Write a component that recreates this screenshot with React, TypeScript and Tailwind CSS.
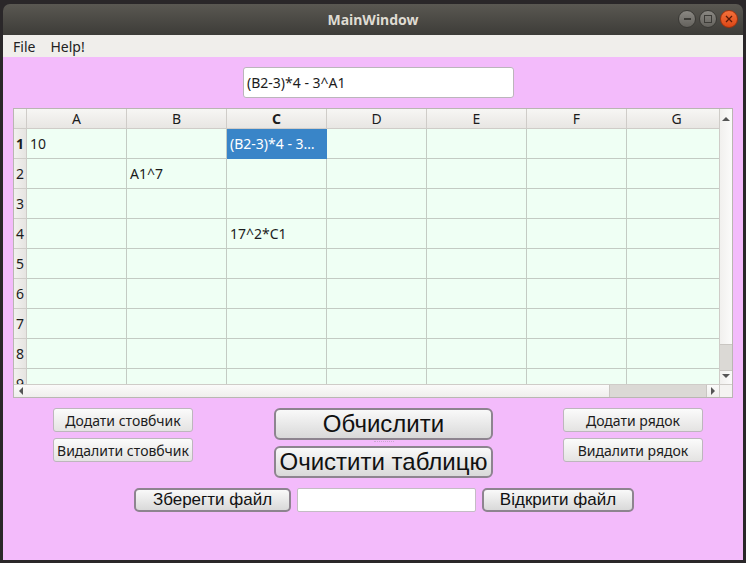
const cols = ['A', 'B', 'C', 'D', 'E', 'F', 'G']

const cells: Record<string, string> = {
  '1A': '10',
  '2B': 'A1^7',
  '4C': '17^2*C1',
}

function WinButton({ kind }: { kind: 'min' | 'max' | 'close' }) {
  const bg =
    kind === 'close'
      ? 'bg-gradient-to-b from-[#f4703a] to-[#dc4716] border-[#9c3310]'
      : 'bg-gradient-to-b from-[#8a8883] to-[#64625d] border-[#3a3935]'
  return (
    <div className={`w-[18px] h-[18px] rounded-full border flex items-center justify-center ${bg}`}>
      {kind === 'min' && <div className="w-[7px] h-[2px] bg-[#3c3b37]" />}
      {kind === 'max' && <div className="w-[8px] h-[8px] border border-[#3c3b37]" />}
      {kind === 'close' && (
        <svg width="8" height="8" viewBox="0 0 8 8">
          <path d="M1 1L7 7M7 1L1 7" stroke="#5a1a08" strokeWidth="1.3" />
        </svg>
      )}
    </div>
  )
}

function SmallButton({ children }: { children: React.ReactNode }) {
  return (
    <div className="h-[24px] w-[140px] flex items-center justify-center rounded-[3px] border border-[#bdb6bd] bg-gradient-to-b from-[#fbfbfb] to-[#e4e3e2] text-[14px] text-[#1c1c1c] font-['Noto_Sans',sans-serif]">
      {children}
    </div>
  )
}

function BigButton({ children }: { children: React.ReactNode }) {
  return (
    <div className="h-[32px] w-[219px] flex items-center justify-center rounded-[6px] border-2 border-[#8d848f] bg-gradient-to-b from-[#f9f9f9] to-[#d9d9d9] text-[24px] text-[#111] font-['Liberation_Sans',sans-serif]">
      {children}
    </div>
  )
}

function FileButton({ children, w }: { children: React.ReactNode; w: string }) {
  return (
    <div className={`h-[24px] ${w} flex items-center justify-center rounded-[5px] border-2 border-[#8d848f] bg-gradient-to-b from-[#f9f9f9] to-[#d9d9d9] text-[17px] text-[#111] font-['Liberation_Sans',sans-serif]`}>
      {children}
    </div>
  )
}

function Sheet() {
  const rows = [1, 2, 3, 4, 5, 6, 7, 8, 9]
  return (
    <div className="ml-[10px] mt-[10px] w-[720px] h-[290px] border border-[#b9b6b2] bg-[#effff4] flex flex-col font-['Noto_Sans',sans-serif] text-[14px] text-[#1c1c1c]">
      <div className="flex h-[275px]">
        <div className="w-[706px] h-[275px] overflow-hidden">
          {/* header */}
          <div className="flex h-[20px]">
            <div className="w-[13px] shrink-0 bg-gradient-to-b from-[#f7f6f4] to-[#e8e6e3] border-r border-b border-[#cfccc8]" />
            {cols.map((c) => (
              <div
                key={c}
                className={`w-[100px] shrink-0 flex items-center justify-center bg-gradient-to-b from-[#f7f6f4] to-[#e8e6e3] border-r border-b border-[#cfccc8] ${c === 'C' ? 'font-bold' : ''}`}
              >
                {c}
              </div>
            ))}
          </div>
          {rows.map((r) => (
            <div key={r} className="flex h-[30px]">
              <div
                className={`w-[13px] shrink-0 flex items-center justify-center bg-gradient-to-r from-[#f2f1ef] to-[#e6e4e1] border-r border-b border-[#cfccc8] ${r === 1 ? 'font-bold' : ''}`}
              >
                {r}
              </div>
              {cols.map((c) => {
                const sel = r === 1 && c === 'C'
                return (
                  <div
                    key={c}
                    className={`w-[100px] shrink-0 flex items-center px-[3px] whitespace-nowrap overflow-hidden border-r border-b ${sel ? 'bg-[#3985c8] text-white border-[#3985c8]' : 'border-[#c3cbc3]'}`}
                  >
                    {sel ? '(B2-3)*4 - 3…' : cells[`${r}${c}`] ?? ''}
                  </div>
                )
              })}
            </div>
          ))}
        </div>
        {/* vertical scrollbar */}
        <div className="w-[13px] h-[275px] border-l border-[#cfccc8] bg-gradient-to-r from-[#f1f0ee] to-[#fbfbfa] flex flex-col items-center">
          <div className="h-[12px] flex items-end">
            <div className="w-0 h-0 border-l-[4px] border-r-[4px] border-b-[4px] border-l-transparent border-r-transparent border-b-[#555]" />
          </div>
          <div className="flex-1" />
          <div className="w-[12px] h-[27px] bg-[#dbd9d5] border-y border-[#c9c6c2]" />
          <div className="h-[13px] flex items-start pt-[3px]">
            <div className="w-0 h-0 border-l-[4px] border-r-[4px] border-t-[4px] border-l-transparent border-r-transparent border-t-[#555]" />
          </div>
        </div>
      </div>
      {/* horizontal scrollbar */}
      <div className="flex h-[13px]">
        <div className="w-[706px] border-t border-[#cfccc8] bg-gradient-to-b from-[#fbfbfa] to-[#efeeec] flex items-center">
          <div className="w-[13px] flex justify-center">
            <div className="w-0 h-0 border-t-[4px] border-b-[4px] border-r-[4px] border-t-transparent border-b-transparent border-r-[#555]" />
          </div>
          <div className="flex-1" />
          <div className="w-[98px] h-[12px] bg-[#dbd9d5] border-x border-[#c9c6c2]" />
          <div className="w-[12px] flex justify-center">
            <div className="w-0 h-0 border-t-[4px] border-b-[4px] border-l-[4px] border-t-transparent border-b-transparent border-l-[#555]" />
          </div>
        </div>
        <div className="w-[13px] border-t border-l border-[#cfccc8] bg-[#f4f3f1]" />
      </div>
    </div>
  )
}

export default function App() {
  return (
    <div className="w-[746px] h-[563px] bg-[#2a2729] pt-[4px] px-[3px] pb-[3px] overflow-hidden">
      <div className="w-[740px] h-[556px] flex flex-col rounded-t-[7px] overflow-hidden">
        {/* title bar */}
        <div className="h-[31px] shrink-0 bg-gradient-to-b from-[#5a5852] to-[#3d3c38] flex items-center relative">
          <div className="flex-1 text-center text-[14px] font-bold text-[#dfdbd2] font-['Noto_Sans',sans-serif]">
            MainWindow
          </div>
          <div className="absolute right-[5px] top-[6px] flex gap-[3px]">
            <WinButton kind="min" />
            <WinButton kind="max" />
            <WinButton kind="close" />
          </div>
        </div>
        {/* menu bar */}
        <div className="h-[22px] shrink-0 bg-[#f0eeeb] flex items-center gap-[15px] pl-[10px] text-[14px] text-[#222] font-['Noto_Sans',sans-serif]">
          <span>File</span>
          <span>Help!</span>
        </div>
        {/* central */}
        <div className="flex-1 bg-[#f3bbfb] flex flex-col relative">
          <div className="pt-[10px] pl-[240px]">
            <div className="w-[271px] h-[31px] bg-white border border-[#bbb5bb] rounded-[3px] flex items-center px-[3px] text-[14px] text-[#1c1c1c] font-['Noto_Sans',sans-serif]">
              (B2-3)*4 - 3^A1
            </div>
          </div>
          <Sheet />
          <div className="flex mt-[10px]">
            <div className="ml-[50px] flex flex-col gap-[6px]">
              <SmallButton>Додати стовбчик</SmallButton>
              <SmallButton>Видалити стовбчик</SmallButton>
            </div>
            <div className="ml-[81px] flex flex-col gap-[6px] relative">
              <BigButton>Обчислити</BigButton>
              <BigButton>Очистити таблицю</BigButton>
              <div className="absolute left-[100px] top-[33px] w-[20px] border-t border-dotted border-[#c9a8cf]" />
            </div>
            <div className="ml-[70px] flex flex-col gap-[6px]">
              <SmallButton>Додати рядок</SmallButton>
              <SmallButton>Видалити рядок</SmallButton>
            </div>
          </div>
          <div className="flex mt-[10px] ml-[131px] gap-[6px]">
            <FileButton w="w-[157px]">Зберегти файл</FileButton>
            <div className="w-[179px] h-[24px] bg-white border border-[#c4bcc4] rounded-[2px]" />
            <FileButton w="w-[152px]">Відкрити файл</FileButton>
          </div>
        </div>
      </div>
    </div>
  )
}
